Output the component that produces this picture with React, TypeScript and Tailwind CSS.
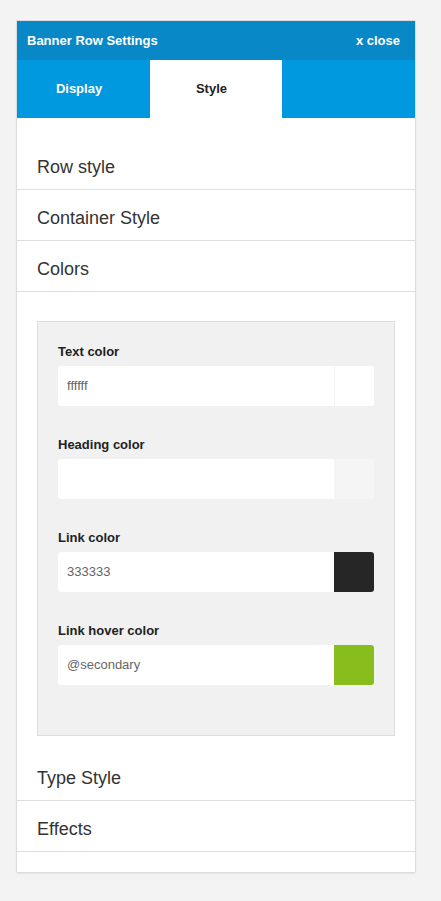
import React from "react";

const font = { fontFamily: '"Liberation Sans", Arial, sans-serif' };

function Row({ label }: { label: string }) {
  return (
    <div className="h-[51px] flex items-center pl-[20px] pt-[6px] border-b border-[#dedede] text-[18px] text-[#333]">
      {label}
    </div>
  );
}

function ColorField({ label, value, swatch }: { label: string; value: string; swatch: string }) {
  return (
    <div className="mb-[31px]">
      <div className="h-[16px] leading-[16px] text-[13px] font-bold text-[#222] mb-[6px]">{label}</div>
      <div className="flex h-[40px] rounded-[3px] bg-white overflow-hidden">
        <div className="flex-1 flex items-center pl-[9px] text-[13px] text-[#666]">{value}</div>
        <div className={`w-[40px] h-full ${swatch}`} />
      </div>
    </div>
  );
}

export default function App() {
  return (
    <div className="min-h-screen bg-[#f3f3f3] pt-[20px]" style={font}>
      <div className="ml-[16px] w-[400px] bg-white border border-[#dcdcdc] rounded-b-[2px] shadow-[0_1px_2px_rgba(0,0,0,0.06)]">
        <div className="h-[39px] bg-[#0888c6] flex items-center justify-between pl-[10px] pr-[15px] text-white text-[13px] font-bold">
          <span>Banner Row Settings</span>
          <span>x close</span>
        </div>
        <div className="flex h-[58px] bg-[#0099e0] text-[13px] font-bold">
          <div className="w-[133px] flex items-center justify-center pr-[9px] text-white">Display</div>
          <div className="w-[132px] flex items-center justify-center pr-[9px] bg-white text-[#222]">Style</div>
          <div className="flex-1" />
        </div>
        <div className="pt-[21px] pb-[20px]">
          <Row label="Row style" />
          <Row label="Container Style" />
          <Row label="Colors" />
          <div className="pt-[29px] pb-[14px] px-[20px]">
            <div className="bg-[#f1f1f1] border border-[#dddddd] pt-[22px] pb-[19px] px-[20px]">
              <ColorField label="Text color" value="ffffff" swatch="bg-white border-l border-[#f4f4f4]" />
              <ColorField label="Heading color" value="" swatch="bg-[#f5f5f5]" />
              <ColorField label="Link color" value="333333" swatch="bg-[#262626]" />
              <ColorField label="Link hover color" value="@secondary" swatch="bg-[#87be1d]" />
            </div>
          </div>
          <Row label="Type Style" />
          <Row label="Effects" />
        </div>
      </div>
    </div>
  );
}
